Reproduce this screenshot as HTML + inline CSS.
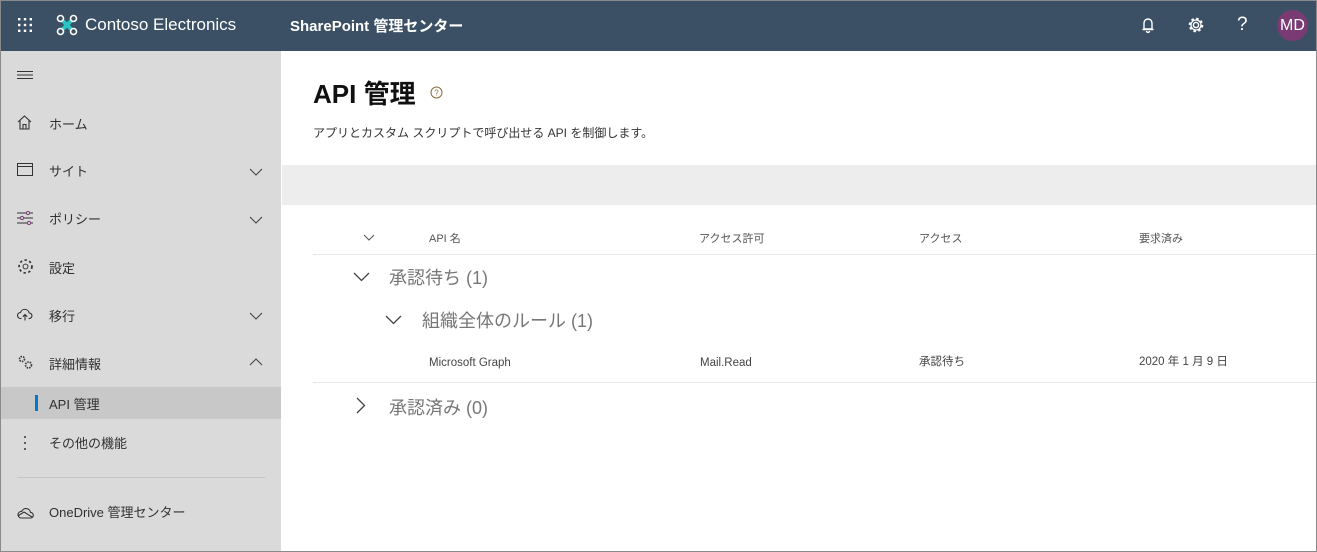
<!DOCTYPE html>
<html><head><meta charset="utf-8"><style>
*{margin:0;padding:0;box-sizing:border-box}
body{width:1317px;height:552px;overflow:hidden;font-family:"Liberation Sans","Noto Sans CJK JP",sans-serif;background:#fff;position:relative}
.frame{position:absolute;left:0;top:0;width:1317px;height:552px;border:1px solid #8a8a8a;z-index:10;pointer-events:none}
.top{position:absolute;left:0;top:0;width:1317px;height:51px;background:#3b5064;color:#fff}
.a{position:absolute;white-space:nowrap}
.side{position:absolute;left:0;top:51px;width:281px;height:501px;background:#dadada}
.ni{position:absolute;left:49px;font-size:13px;color:#323130}
.ic{position:absolute;left:17px}
.chev{position:absolute;left:249px}
.hdr{font-size:11px;color:#555;position:absolute;top:230px}
.g1{font-size:18px;color:#777;position:absolute}
.cell{font-size:11.5px;color:#444;position:absolute;top:355px}
.lat{top:357px}
</style></head><body>
<div class="top">
 <svg class="a" style="left:17px;top:17px" width="16" height="16" viewBox="0 0 16 16" fill="#fff">
  <rect x="1" y="1" width="2.4" height="2.4"/><rect x="6.8" y="1" width="2.4" height="2.4"/><rect x="12.6" y="1" width="2.4" height="2.4"/>
  <rect x="1" y="6.8" width="2.4" height="2.4"/><rect x="6.8" y="6.8" width="2.4" height="2.4"/><rect x="12.6" y="6.8" width="2.4" height="2.4"/>
  <rect x="1" y="12.6" width="2.4" height="2.4"/><rect x="6.8" y="12.6" width="2.4" height="2.4"/><rect x="12.6" y="12.6" width="2.4" height="2.4"/>
 </svg>
 <svg class="a" style="left:56px;top:14px" width="22" height="22" viewBox="0 0 22 22">
  <path d="M7 7 L11 11 L15 7 M7 15 L11 11 L15 15" stroke="#2bc4c4" stroke-width="4" fill="none"/>
  <circle cx="4.5" cy="4.5" r="3" stroke="#fff" stroke-width="1.6" fill="none"/><circle cx="17.5" cy="4.5" r="3" stroke="#fff" stroke-width="1.6" fill="none"/>
  <circle cx="4.5" cy="17.5" r="3" stroke="#fff" stroke-width="1.6" fill="none"/><circle cx="17.5" cy="17.5" r="3" stroke="#fff" stroke-width="1.6" fill="none"/>
  <path d="M8 11 L11 8 L14 11 L11 14Z" fill="#2bc4c4"/>
 </svg>
 <div class="a" style="left:85px;top:15px;font-size:17px">Contoso Electronics</div>
 <div class="a" style="left:290px;top:15px;font-size:15px;font-weight:bold">SharePoint 管理センター</div>
 <svg class="a" style="left:1141px;top:17px" width="14" height="16" viewBox="0 0 14 16"><path d="M3 12 V6 a4 4 0 0 1 8 0 V12 Z M1.5 12.5 H12.5 M5.5 14 a1.5 1.5 0 0 0 3 0" stroke="#fff" stroke-width="1.4" fill="none"/></svg>
 <svg class="a" style="left:1187px;top:16px" width="18" height="18" viewBox="0 0 18 18"><circle cx="9" cy="9" r="2.6" stroke="#fff" stroke-width="1.4" fill="none"/><circle cx="9" cy="9" r="6" stroke="#fff" stroke-width="2.6" stroke-dasharray="2.4 2.3" fill="none"/><circle cx="9" cy="9" r="5" stroke="#fff" stroke-width="1.3" fill="none"/></svg>
 <div class="a" style="left:1237px;top:14px;font-size:19px">?</div>
 <div class="a" style="left:1277px;top:10px;width:31px;height:31px;border-radius:50%;background:#7a3b74;font-size:16px;line-height:31px;text-align:center">MD</div>
</div>

<div class="side">
 <svg class="ic" style="top:19px" width="16" height="10"><path d="M0 1.5H16M0 5H16M0 8.5H16" stroke="#333" stroke-width="1"/></svg>
 <svg class="ic" style="top:64px" width="15" height="15" viewBox="0 0 15 15"><path d="M1 7 L7.5 1 L14 7 M3 5.5 V14 H12 V5.5 M6 14 V9.5 H9 V14" stroke="#333" stroke-width="1.1" fill="none"/></svg>
 <div class="ni" style="top:63px">ホーム</div>
 <svg class="ic" style="top:112px" width="16" height="13"><rect x="0.5" y="0.5" width="15" height="12" stroke="#333" fill="none"/><path d="M0 3.5H16" stroke="#333"/></svg>
 <div class="ni" style="top:110px">サイト</div>
 <svg class="ic" style="top:160px" width="16" height="14" viewBox="0 0 16 14"><path d="M0 2H16M0 7H16M0 12H16" stroke="#333"/><circle cx="11" cy="2" r="1.6" fill="#dadada" stroke="#7a3b74"/><circle cx="5" cy="7" r="1.6" fill="#dadada" stroke="#7a3b74"/><circle cx="12" cy="12" r="1.6" fill="#dadada" stroke="#7a3b74"/></svg>
 <div class="ni" style="top:158px">ポリシー</div>
 <svg class="ic" style="top:207px" width="17" height="17" viewBox="0 0 18 18"><circle cx="9" cy="9" r="2.6" stroke="#333" fill="none"/><circle cx="9" cy="9" r="6.5" stroke="#333" stroke-width="2.4" stroke-dasharray="2.4 2.5" fill="none"/><circle cx="9" cy="9" r="5.4" stroke="#dadada" stroke-width="1" fill="none"/></svg>
 <div class="ni" style="top:207px">設定</div>
 <svg class="ic" style="top:257px" width="16" height="13" viewBox="0 0 16 13"><path d="M4.5 10.5 H3.5 a3 3 0 0 1 0-6 a4.5 4.5 0 0 1 8.7 0.5 a2.7 2.7 0 0 1 0 5.5 H11.5 M8 12.5 V6.5 M5.8 8.7 L8 6.5 L10.2 8.7" stroke="#333" stroke-width="1.1" fill="none"/></svg>
 <div class="ni" style="top:255px">移行</div>
 <svg class="ic" style="top:303px" width="17" height="17" viewBox="0 0 17 17"><circle cx="5" cy="5" r="2.5" stroke="#333" stroke-width="1.6" stroke-dasharray="1.5 1" fill="none"/><circle cx="11.5" cy="11" r="3" stroke="#333" stroke-width="1.6" stroke-dasharray="1.5 1" fill="none"/></svg>
 <div class="ni" style="top:303px">詳細情報</div>
 <svg class="chev" style="top:117px" width="14" height="8"><path d="M1 1L7 7L13 1" stroke="#444" stroke-width="1.1" fill="none"/></svg>
 <svg class="chev" style="top:165px" width="14" height="8"><path d="M1 1L7 7L13 1" stroke="#444" stroke-width="1.1" fill="none"/></svg>
 <svg class="chev" style="top:261px" width="14" height="8"><path d="M1 1L7 7L13 1" stroke="#444" stroke-width="1.1" fill="none"/></svg>
 <svg class="chev" style="top:307px" width="14" height="8"><path d="M1 7L7 1L13 7" stroke="#444" stroke-width="1.1" fill="none"/></svg>
 <div style="position:absolute;left:0;top:336px;width:281px;height:32px;background:#c8c8c8"></div>
 <div style="position:absolute;left:35px;top:344px;width:3px;height:16px;background:#0078d4"></div>
 <div class="ni" style="top:343px">API 管理</div>
 <svg class="ic" style="top:384px;left:23px" width="4" height="16"><circle cx="2" cy="2" r="1" fill="#333"/><circle cx="2" cy="8" r="1" fill="#333"/><circle cx="2" cy="14" r="1" fill="#333"/></svg>
 <div class="ni" style="top:382px">その他の機能</div>
 <div style="position:absolute;left:17px;top:426px;width:248px;height:1px;background:#c4c4c4"></div>
 <svg class="ic" style="top:456px" width="17" height="12" viewBox="0 0 17 12"><path d="M4 11 H13.5 a2.8 2.8 0 0 0 0-5.6 a4.6 4.6 0 0 0-8.8-1 a3.3 3.3 0 0 0-0.7 6.6Z M1.5 8.5 L7 5 L15 10" stroke="#333" stroke-width="1.1" fill="none"/></svg>
 <div class="ni" style="top:451px">OneDrive 管理センター</div>
</div>

<div class="a" style="left:313px;top:74px;font-size:26px;font-weight:bold;color:#111">API 管理</div>
<svg class="a" style="left:430px;top:86px" width="13" height="13"><circle cx="6.5" cy="6.5" r="5.5" stroke="#8a6a3a" fill="none"/><text x="6.5" y="9.5" font-size="8" text-anchor="middle" fill="#8a6a3a" font-family="Liberation Sans">?</text></svg>
<div class="a" style="left:313px;top:124px;font-size:12px;color:#333">アプリとカスタム スクリプトで呼び出せる API を制御します。</div>
<div style="position:absolute;left:282px;top:165px;width:1035px;height:40px;background:#ededed"></div>

<svg class="a" style="left:363px;top:234px" width="12" height="7"><path d="M1 1L6 6L11 1" stroke="#555" fill="none"/></svg>
<div class="hdr" style="left:429px">API 名</div>
<div class="hdr" style="left:699px">アクセス許可</div>
<div class="hdr" style="left:919px">アクセス</div>
<div class="hdr" style="left:1139px">要求済み</div>
<div style="position:absolute;left:313px;top:254px;width:1004px;height:1px;background:#e6e6e6"></div>

<svg class="a" style="left:353px;top:272px" width="17" height="10"><path d="M1 1L8.5 8.5L16 1" stroke="#444" stroke-width="1.3" fill="none"/></svg>
<div class="g1" style="left:389px;top:264px">承認待ち (1)</div>
<svg class="a" style="left:385px;top:315px" width="17" height="10"><path d="M1 1L8.5 8.5L16 1" stroke="#444" stroke-width="1.3" fill="none"/></svg>
<div class="g1" style="left:422px;top:307px">組織全体のルール (1)</div>

<div class="cell lat" style="left:429px">Microsoft Graph</div>
<div class="cell lat" style="left:700px">Mail.Read</div>
<div class="cell" style="left:919px;top:353px">承認待ち</div>
<div class="cell" style="left:1139px;top:353px">2020 年 1 月 9 日</div>
<div style="position:absolute;left:313px;top:382px;width:1004px;height:1px;background:#e6e6e6"></div>

<svg class="a" style="left:356px;top:397px" width="10" height="17"><path d="M1 1L8.5 8.5L1 16" stroke="#444" stroke-width="1.3" fill="none"/></svg>
<div class="g1" style="left:389px;top:394px">承認済み (0)</div>

<div class="frame"></div>
</body></html>
